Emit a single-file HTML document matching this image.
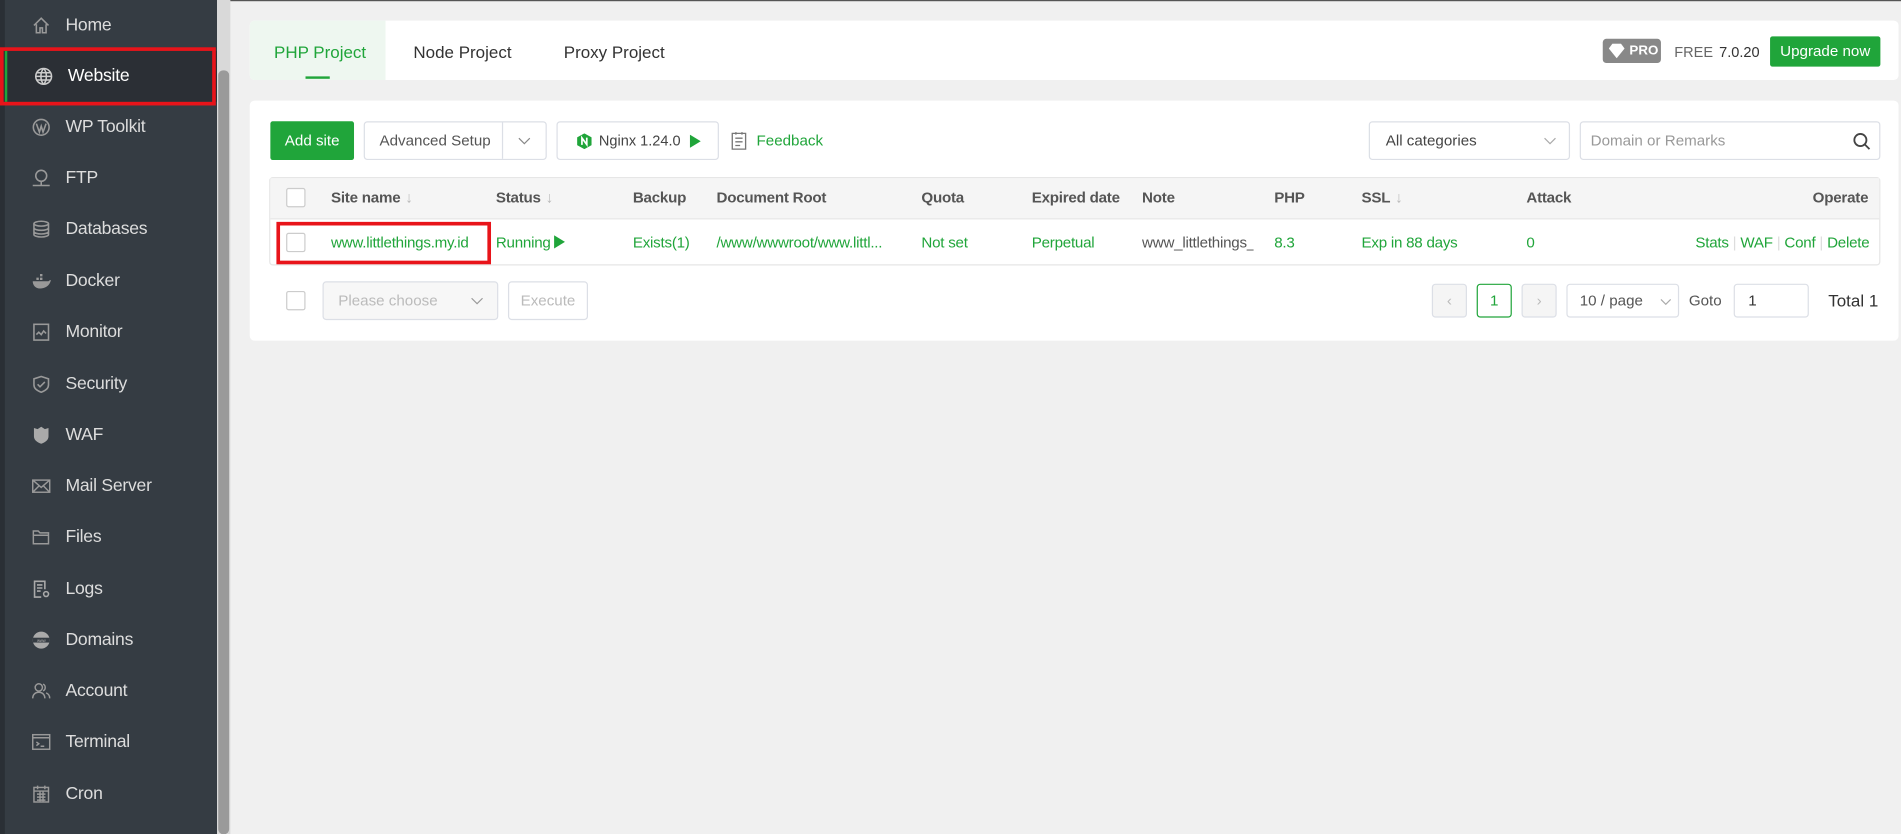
<!DOCTYPE html>
<html><head><meta charset="utf-8"><style>
*{box-sizing:border-box;margin:0;padding:0}
html,body{width:1901px;height:834px;overflow:hidden;background:#f0f0f0;font-family:"Liberation Sans",Arial,sans-serif}
#w{position:absolute;left:0;top:0;width:1568px;height:688px;transform:scale(1.21237);transform-origin:0 0}
.abs{position:absolute}
#sb{left:0;top:0;width:179px;height:688px;background:#353c43}
#sb .edge{left:0;top:0;width:4px;height:688px;background:#2a2f35}
#scroll{left:179px;top:0;width:11px;height:688px;background:#d9d9d9}
#scroll div{position:absolute;left:1px;top:58px;width:9px;height:630px;background:#9a9a9a;border-radius:4px}
.it{position:absolute;left:4px;width:175px;height:42px;color:#ddd;font-size:14.5px;line-height:42px;padding-left:50px;letter-spacing:-0.2px}
.it svg{position:absolute;left:22px;top:13px}
.act{background:#2b2f35;color:#fff;border-left:2px solid #20a53a}
.card{position:absolute;background:#fff;border-radius:4px}
.g{color:#20a53a}
.btn{position:absolute;border:1px solid #dcdfe6;border-radius:3px;background:#fff;font-size:12.5px;color:#555;text-align:center}
.th{position:absolute;top:156px;font-size:12.5px;color:#555;font-weight:bold;letter-spacing:-0.2px}
.td{position:absolute;top:193px;font-size:12.5px;color:#20a53a;white-space:nowrap;letter-spacing:-0.2px}
.cb{position:absolute;width:16px;height:16px;border:1px solid #ccc;border-radius:2px;background:#fff}
.ar{color:#bbb;font-weight:normal;margin-left:4px}
</style></head><body><div id="w">
<div id="sb" class="abs"><div class="edge abs"></div>
<div class="it" style="top:0">Home<svg width="16" height="16" viewBox="0 0 16 16" fill="none" stroke="#999" stroke-width="1.3"><path d="M2 8L8 2l6 6M4 7v7h3v-4h2v4h3V7"/></svg></div>
<div class="it act" style="top:42px;left:4px">Website<svg width="16" height="16" viewBox="0 0 16 16" fill="none" stroke="#ccc" stroke-width="1.3"><circle cx="8" cy="8" r="6.5"/><path d="M1.5 8h13M8 1.5c-3 3-3 10 0 13M8 1.5c3 3 3 10 0 13M2.5 5h11M2.5 11h11"/></svg></div>
<div class="it" style="top:84px">WP Toolkit<svg width="16" height="16" viewBox="0 0 16 16" fill="none" stroke="#999" stroke-width="1.3"><circle cx="8" cy="8" r="6.5"/><path d="M4 5l2.5 7L8 7l1.5 5L12 5"/></svg></div>
<div class="it" style="top:126px">FTP<svg width="16" height="16" viewBox="0 0 16 16" fill="none" stroke="#999" stroke-width="1.3"><circle cx="8" cy="6" r="4.5"/><path d="M1 14h14M8 10.5v3.5"/></svg></div>
<div class="it" style="top:168px">Databases<svg width="16" height="16" viewBox="0 0 16 16" fill="none" stroke="#999" stroke-width="1.3"><ellipse cx="8" cy="3.5" rx="6" ry="2"/><path d="M2 3.5v9c0 1 2.7 2 6 2s6-1 6-2v-9M2 7c0 1 2.7 2 6 2s6-1 6-2M2 10c0 1 2.7 2 6 2s6-1 6-2"/></svg></div>
<div class="it" style="top:211px">Docker<svg width="16" height="16" viewBox="0 0 16 16" fill="#999"><path d="M1 8h13c1-1 2-1 2-1-1 5-5 7-9 7-4 0-6-3-6-6zM4 5h2v2H4zM7 5h2v2H7zM7 2h2v2H7z"/></svg></div>
<div class="it" style="top:253px">Monitor<svg width="16" height="16" viewBox="0 0 16 16" fill="none" stroke="#999" stroke-width="1.3"><rect x="2" y="1.5" width="12" height="13"/><path d="M4 10l2-2 2 2 2-3 2 2"/></svg></div>
<div class="it" style="top:296px">Security<svg width="16" height="16" viewBox="0 0 16 16" fill="none" stroke="#999" stroke-width="1.3"><path d="M8 1.5l6 2v5c0 3-3 5-6 6-3-1-6-3-6-6v-5z"/><path d="M5 8l2 2 4-4"/></svg></div>
<div class="it" style="top:338px">WAF<svg width="16" height="16" viewBox="0 0 16 16" fill="#aaa"><path d="M2 2l3 1 3-2 3 2 3-1v7c0 3-3 5-6 6-3-1-6-3-6-6z"/></svg></div>
<div class="it" style="top:380px">Mail Server<svg width="16" height="16" viewBox="0 0 16 16" fill="none" stroke="#999" stroke-width="1.2"><rect x="1" y="3" width="14" height="10"/><path d="M1 3l7 6 7-6M1 13l5-5M15 13l-5-5"/></svg></div>
<div class="it" style="top:422px">Files<svg width="16" height="16" viewBox="0 0 16 16" fill="none" stroke="#999" stroke-width="1.2"><path d="M1.5 3h4l1.5 1.5h7v9h-12.5zM1.5 6.5h13"/></svg></div>
<div class="it" style="top:465px">Logs<svg width="16" height="16" viewBox="0 0 16 16" fill="none" stroke="#aaa" stroke-width="1.3"><path d="M11 8V1.5H2.5v13H8M4.5 4.5h4.5M4.5 7h4.5M4.5 9.5h3"/><circle cx="12" cy="12" r="2"/></svg></div>
<div class="it" style="top:507px">Domains<svg width="16" height="16" viewBox="0 0 16 16"><circle cx="8" cy="8" r="7" fill="#aaa"/><rect x="1" y="6" width="14" height="4" fill="#353c43"/><text x="8" y="9.5" font-size="3.5" fill="#aaa" text-anchor="middle" font-family="Liberation Sans">www</text></svg></div>
<div class="it" style="top:549px">Account<svg width="16" height="16" viewBox="0 0 16 16" fill="none" stroke="#999" stroke-width="1.2"><circle cx="6" cy="5" r="3"/><path d="M1 14c0-3 2-5 5-5s5 2 5 5M9.5 2.3a3 3 0 010 5.5M12 9.5c2 .8 3 2.5 3 4.5"/></svg></div>
<div class="it" style="top:591px">Terminal<svg width="16" height="16" viewBox="0 0 16 16" fill="none" stroke="#999" stroke-width="1.2"><rect x="1" y="2" width="14" height="12"/><path d="M1 4.5h14M4 8l2 1.5L4 11M7.5 11.5h3"/></svg></div>
<div class="it" style="top:634px">Cron<svg width="16" height="16" viewBox="0 0 16 16" fill="none" stroke="#999" stroke-width="1.2"><rect x="2" y="2.5" width="12" height="12"/><path d="M2 5.5h12M5 1v3M11 1v3M4.5 8h7M4.5 10.5h7M4.5 13h7M7 6v8M9.5 6v8"/></svg></div>
</div>
<div id="scroll" class="abs"><div></div></div>
<div class="abs" style="left:190px;top:0;width:1378px;height:1px;background:#555"></div>

<div class="card" style="left:206px;top:17px;width:1360px;height:49px">
 <div class="abs" style="left:0;top:0;width:112px;height:49px;background:#eef7f0;border-radius:4px 0 0 4px"></div>
 <div class="abs g" style="left:20px;top:18px;font-size:14px">PHP Project</div>
 <div class="abs" style="left:46px;top:46px;width:20px;height:2px;background:#20a53a"></div>
 <div class="abs" style="left:135px;top:18px;font-size:14px;color:#333">Node Project</div>
 <div class="abs" style="left:259px;top:18px;font-size:14px;color:#333">Proxy Project</div>
 <div class="abs" style="left:1116px;top:15px;width:48px;height:20px;background:#888;border-radius:3px;color:#fff;font-size:11px;font-weight:bold;line-height:20px;padding-left:22px">PRO<svg class="abs" style="left:5px;top:4px" width="13" height="12" viewBox="0 0 13 12" fill="#fff"><path d="M3 0h7l3 4-6.5 8L0 4z"/></svg></div>
 <div class="abs" style="left:1175px;top:19px;font-size:12px;color:#666">FREE</div>
 <div class="abs" style="left:1212px;top:19px;font-size:12px;color:#333">7.0.20</div>
 <div class="abs" style="left:1254px;top:13px;width:91px;height:25px;background:#20a53a;border-radius:2px;color:#fff;font-size:12.5px;line-height:25px;text-align:center">Upgrade now</div>
</div>

<div class="card" style="left:206px;top:83px;width:1360px;height:198px"></div>
<div class="abs" style="left:223px;top:100px;width:69px;height:32px;background:#20a53a;border-radius:2px;color:#fff;font-size:12.5px;line-height:32px;text-align:center">Add site</div>
<div class="btn" style="left:300px;top:100px;width:151px;height:32px;line-height:30px;text-align:left;padding-left:12px">Advanced Setup<span class="abs" style="left:113px;top:0;width:1px;height:30px;background:#dcdfe6"></span><svg class="abs" style="left:126px;top:12px" width="11" height="7" viewBox="0 0 11 7" fill="none" stroke="#888"><path d="M1 1l4.5 4.5L10 1"/></svg></div>
<div class="btn" style="left:459px;top:100px;width:134px;height:32px;line-height:30px;text-align:left;padding-left:34px;color:#444;font-size:12px">Nginx 1.24.0<svg class="abs" style="left:16px;top:9px" width="12" height="13" viewBox="0 0 12 13"><path d="M6 0l6 3.3v6.4L6 13 0 9.7V3.3z" fill="#20a53a"/><path d="M4 9.5V3.8l4 5.4V3.5" stroke="#fff" stroke-width="1.4" fill="none"/></svg><svg class="abs" style="left:109px;top:10px" width="9" height="11" viewBox="0 0 9 11"><path d="M0 0l9 5.5L0 11z" fill="#20a53a"/></svg></div>
<svg class="abs" style="left:603px;top:108px" width="13" height="16" viewBox="0 0 13 16" fill="none" stroke="#777" stroke-width="1.1"><path d="M1 2h11v13H1zM4 1v2M9 1v2M3.5 6h6M3.5 9h6M3.5 12h4"/></svg>
<div class="abs g" style="left:624px;top:109px;font-size:12.5px">Feedback</div>
<div class="btn" style="left:1129px;top:100px;width:166px;height:32px;line-height:30px;text-align:left;padding-left:13px;color:#444">All categories<svg class="abs" style="left:143px;top:12px" width="11" height="7" viewBox="0 0 11 7" fill="none" stroke="#aaa"><path d="M1 1l4.5 4.5L10 1"/></svg></div>
<div class="btn" style="left:1303px;top:100px;width:248px;height:32px;line-height:30px;text-align:left;padding-left:8px;color:#999">Domain or Remarks<svg class="abs" style="left:224px;top:8px" width="15" height="15" viewBox="0 0 15 15" fill="none" stroke="#444" stroke-width="1.5"><circle cx="6.5" cy="6.5" r="5"/><path d="M10 10l4 4"/></svg></div>

<div class="abs" style="left:222px;top:146px;width:1329px;height:73px;border:1px solid #e6e6e6;border-radius:3px"></div>
<div class="abs" style="left:223px;top:147px;width:1327px;height:34px;background:#f5f5f5;border-bottom:1px solid #e6e6e6"></div>
<div class="cb" style="left:236px;top:155px"></div>
<div class="th" style="left:273px">Site name<span class="ar">↓</span></div>
<div class="th" style="left:409px">Status<span class="ar">↓</span></div>
<div class="th" style="left:522px">Backup</div>
<div class="th" style="left:591px">Document Root</div>
<div class="th" style="left:760px">Quota</div>
<div class="th" style="left:851px">Expired date</div>
<div class="th" style="left:942px">Note</div>
<div class="th" style="left:1051px">PHP</div>
<div class="th" style="left:1123px">SSL<span class="ar">↓</span></div>
<div class="th" style="left:1259px">Attack</div>
<div class="th" style="right:27px">Operate</div>
<div class="cb" style="left:236px;top:192px"></div>
<div class="td" style="left:273px">www.littlethings.my.id</div>
<div class="abs" style="left:228px;top:183px;width:177px;height:35px;border:3px solid #e8141a"></div>
<div class="abs" style="left:0px;top:39px;width:178px;height:48px;border:3px solid #e8141a"></div>
<div class="td" style="left:409px">Running <svg width="9" height="11" viewBox="0 0 9 11" style="vertical-align:-1px"><path d="M0 0l9 5.5L0 11z" fill="#20a53a"/></svg></div>
<div class="td" style="left:522px">Exists(1)</div>
<div class="td" style="left:591px">/www/wwwroot/www.littl...</div>
<div class="td" style="left:760px">Not set</div>
<div class="td" style="left:851px">Perpetual</div>
<div class="td" style="left:942px;color:#555;width:92px;overflow:hidden">www_littlethings_my_id</div>
<div class="td" style="left:1051px">8.3</div>
<div class="td" style="left:1123px">Exp in 88 days</div>
<div class="td" style="left:1259px">0</div>
<div class="td" style="right:26px">Stats <span style="color:#ddd">|</span> WAF <span style="color:#ddd">|</span> Conf <span style="color:#ddd">|</span> Delete</div>

<div class="cb" style="left:236px;top:240px"></div>
<div class="btn" style="left:266px;top:232px;width:145px;height:32px;line-height:30px;text-align:left;padding-left:12px;color:#bbb;background:#f7f7f7">Please choose<svg class="abs" style="left:121px;top:12px" width="11" height="7" viewBox="0 0 11 7" fill="none" stroke="#999"><path d="M1 1l4.5 4.5L10 1"/></svg></div>
<div class="btn" style="left:419px;top:232px;width:66px;height:32px;line-height:30px;color:#bbb">Execute</div>
<div class="btn" style="left:1181px;top:234px;width:29px;height:28px;line-height:26px;color:#bbb;background:#f5f5f5">‹</div>
<div class="btn" style="left:1218px;top:234px;width:29px;height:28px;line-height:26px;color:#20a53a;border-color:#20a53a">1</div>
<div class="btn" style="left:1255px;top:234px;width:29px;height:28px;line-height:26px;color:#bbb;background:#f5f5f5">›</div>
<div class="btn" style="left:1292px;top:234px;width:93px;height:28px;line-height:26px;text-align:left;padding-left:10px">10 / page<svg class="abs" style="left:76px;top:11px" width="10" height="6" viewBox="0 0 10 6" fill="none" stroke="#aaa"><path d="M1 1l4 4 4-4"/></svg></div>
<div class="abs" style="left:1393px;top:241px;font-size:12.5px;color:#555">Goto</div>
<div class="btn" style="left:1430px;top:234px;width:62px;height:28px;line-height:26px;text-align:left;padding-left:11px;color:#333">1</div>
<div class="abs" style="left:1508px;top:240px;font-size:14px;color:#333">Total 1</div>
</div></body></html>
